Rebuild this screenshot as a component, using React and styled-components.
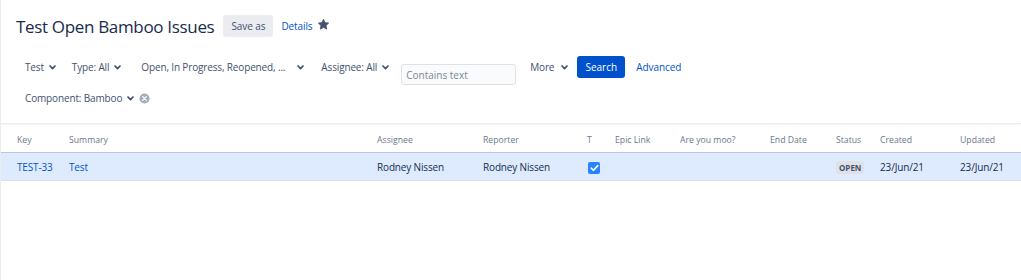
import styled, { createGlobalStyle } from "styled-components";

const Global = createGlobalStyle`
  body {
    margin: 0;
    background: #fff;
    font-family: "Open Sans", "Noto Sans", sans-serif;
    color: #172b4d;
  }
`;

const Page = styled.div`
  width: 1021px;
  height: 280px;
  border-left: 1px solid #ebecf0;
  box-sizing: border-box;
  overflow: hidden;
`;

const Header = styled.div`
  display: flex;
  align-items: center;
  padding: 15px 0 0 15px;
  height: 22px;
`;

const Title = styled.h1`
  margin: 0 9px 0 0;
  font-size: 17px;
  font-weight: 400;
  letter-spacing: -0.33px;
  color: #172b4d;
`;

const GreyButton = styled.button`
  box-sizing: border-box;
  width: 50px;
  height: 22px;
  padding: 0;
  border: none;
  border-radius: 3px;
  background: #ebecf0;
  color: #42526e;
  font-family: inherit;
  font-size: 10px;
  letter-spacing: -0.1px;
`;

const Link = styled.a`
  color: #0052cc;
  font-size: 10px;
  letter-spacing: -0.1px;
  text-decoration: none;
  margin-left: ${(p) => p.$ml || 0}px;
`;

const StarIcon = styled.svg`
  margin-left: 5px;
  width: 13px;
  height: 13px;
  margin-top: -3px;
`;

const Filters = styled.div`
  display: flex;
  align-items: flex-start;
  padding: 19px 0 0 24px;
`;

const FilterRow2 = styled.div`
  display: flex;
  align-items: center;
  padding: 2px 0 0 24px;
`;

const Criteria = styled.div`
  display: flex;
  align-items: center;
  height: 22px;
  margin-right: ${(p) => p.$mr}px;
  color: #42526e;
  font-size: 10px;
  letter-spacing: -0.15px;
  white-space: nowrap;
`;

const Chevron = styled.svg`
  width: 7px;
  height: 5px;
  margin-left: ${(p) => p.$ml || 5}px;
`;

const TextInput = styled.input`
  box-sizing: border-box;
  width: 115px;
  height: 21px;
  margin: 8px 14px 0 1px;
  padding: 0 4px;
  border: 1px solid #dfe1e6;
  border-radius: 3px;
  background: #fafbfc;
  font-family: inherit;
  font-size: 10px;
  &::placeholder {
    color: #7a869a;
  }
`;

const SearchButton = styled.button`
  box-sizing: border-box;
  width: 48px;
  height: 22px;
  padding: 0;
  border: none;
  border-radius: 3px;
  background: #0052cc;
  color: #fff;
  font-family: inherit;
  font-size: 10px;
  margin: 0 11px 0 0;
`;

const AdvLink = styled(Link)`
  line-height: 22px;
`;

const ClearIcon = styled.svg`
  width: 11px;
  height: 11px;
  margin-left: 5px;
`;

const Divider = styled.div`
  margin-top: 14px;
  height: 1px;
  background: #ebecf0;
  box-shadow: 0 1px 1px rgba(9, 30, 66, 0.04);
`;

const Table = styled.table`
  width: 100%;
  border-collapse: collapse;
  table-layout: fixed;
  font-size: 10px;
  letter-spacing: -0.15px;
`;

const Th = styled.th`
  height: 24px;
  padding: 4px 0 0;
  text-align: left;
  font-weight: 400;
  font-size: 8.7px;
  letter-spacing: 0;
  color: #6b778c;
  white-space: nowrap;
  &:first-child {
    padding-left: 16px;
  }
`;

const Row = styled.tr`
  background: #deebff;
  border-top: 1px solid #c1c7d0;
  border-bottom: 1px solid #dfe1e6;
`;

const Td = styled.td`
  height: 27px;
  padding: 0;
  color: #172b4d;
  white-space: nowrap;
  &:first-child {
    padding-left: 16px;
  }
`;

const IssueLink = styled.a`
  color: #0052cc;
  text-decoration: none;
`;

const Checkbox = styled.span`
  display: inline-flex;
  align-items: center;
  justify-content: center;
  width: 12px;
  height: 12px;
  margin-left: 1px;
  border-radius: 2px;
  background: #2684ff;
  vertical-align: middle;
`;

const Lozenge = styled.span`
  display: inline-block;
  padding: 0 3px;
  border-radius: 3px;
  background: #dfe1e6;
  color: #42526e;
  font-size: 8px;
  font-weight: 700;
  line-height: 13px;
  letter-spacing: 0;
`;

const columns = [
  ["Key", 68],
  ["Summary", 308],
  ["Assignee", 106],
  ["Reporter", 104],
  ["T", 28],
  ["Epic Link", 65],
  ["Are you moo?", 90],
  ["End Date", 66],
  ["Status", 44],
  ["Created", 80],
  ["Updated", null],
];

const Down = ({ ml }) => (
  <Chevron $ml={ml} viewBox="0 0 7 5">
    <path d="M1 1 L3.5 3.6 L6 1" fill="none" stroke="#42526e" strokeWidth="1.7" strokeLinecap="round" strokeLinejoin="round" />
  </Chevron>
);

export default function App() {
  return (
    <Page>
      <Global />
      <Header>
        <Title>Test Open Bamboo Issues</Title>
        <GreyButton>Save as</GreyButton>
        <Link $ml={8}>Details</Link>
        <StarIcon viewBox="0 0 24 24">
          <path
            d="M12 2.5l2.9 6.1 6.6.8-4.9 4.6 1.3 6.6L12 17.3l-5.9 3.3 1.3-6.6-4.9-4.6 6.6-.8z"
            fill="#42526e"
            stroke="#42526e"
            strokeWidth="1.5"
            strokeLinejoin="round"
          />
        </StarIcon>
      </Header>
      <Filters>
        <Criteria $mr={16}>Test<Down /></Criteria>
        <Criteria $mr={20}>Type: All<Down /></Criteria>
        <Criteria $mr={17}>Open, In Progress, Reopened, ...<Down ml={12} /></Criteria>
        <Criteria $mr={11}>Assignee: All<Down /></Criteria>
        <TextInput placeholder="Contains text" />
        <Criteria $mr={9}>More<Down ml={7} /></Criteria>
        <SearchButton>Search</SearchButton>
        <AdvLink>Advanced</AdvLink>
      </Filters>
      <FilterRow2>
        <Criteria $mr={0}>Component: Bamboo<Down /></Criteria>
        <ClearIcon viewBox="0 0 12 12">
          <circle cx="6" cy="6" r="5.5" fill="#a5adba" />
          <path d="M4 4 L8 8 M8 4 L4 8" stroke="#fff" strokeWidth="1.4" strokeLinecap="round" />
        </ClearIcon>
      </FilterRow2>
      <Divider />
      <Table>
        <colgroup>
          {columns.map(([name, w]) => (
            <col key={name} style={w ? { width: w } : undefined} />
          ))}
        </colgroup>
        <thead>
          <tr>
            {columns.map(([name]) => (
              <Th key={name}>{name}</Th>
            ))}
          </tr>
        </thead>
        <tbody>
          <Row>
            <Td><IssueLink>TEST-33</IssueLink></Td>
            <Td><IssueLink>Test</IssueLink></Td>
            <Td>Rodney Nissen</Td>
            <Td>Rodney Nissen</Td>
            <Td>
              <Checkbox>
                <svg width="9" height="8" viewBox="0 0 9 8">
                  <path d="M1.2 4.2 L3.5 6.3 L7.8 1.6" fill="none" stroke="#fff" strokeWidth="1.6" strokeLinecap="round" strokeLinejoin="round" />
                </svg>
              </Checkbox>
            </Td>
            <Td />
            <Td />
            <Td />
            <Td><Lozenge>OPEN</Lozenge></Td>
            <Td>23/Jun/21</Td>
            <Td>23/Jun/21</Td>
          </Row>
        </tbody>
      </Table>
    </Page>
  );
}
